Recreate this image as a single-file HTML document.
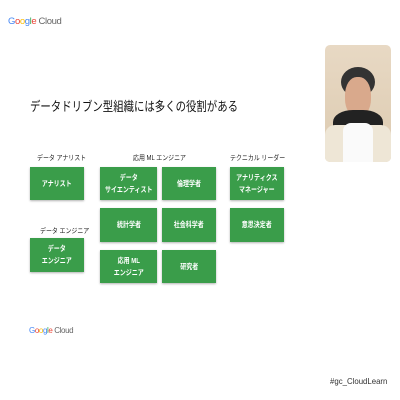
<html><head><style>
body{margin:0;width:400px;height:400px;background:#fff;position:relative;overflow:hidden;font-family:"Liberation Sans","Noto Sans CJK JP",sans-serif;color:#222}
.a{position:absolute}
.b{position:absolute;background:#3a9d4a;color:#fff;font-size:7.5px;font-weight:bold;display:flex;align-items:center;justify-content:center;text-align:center;line-height:12px;box-shadow:0 1px 2px rgba(0,0,0,.3);white-space:nowrap}
.b span{display:inline-block;transform:scaleX(.8)}
.l{position:absolute;font-size:7px;color:#222;white-space:nowrap;transform:scaleX(.85);transform-origin:left}
.g{letter-spacing:-.4px;white-space:nowrap}
</style></head><body>
<div class="a g" style="left:8px;top:16px;font-size:9.5px"><span style="color:#4285f4">G</span><span style="color:#ea4335">o</span><span style="color:#fbbc05">o</span><span style="color:#4285f4">g</span><span style="color:#34a853">l</span><span style="color:#ea4335">e</span> <span style="color:#666">Cloud</span></div>
<div class="a" style="left:30px;top:96px;font-size:13px;white-space:nowrap;transform:scaleX(.8);transform-origin:left;color:#111">データドリブン型組織には多くの役割がある</div>
<div class="a" style="left:325px;top:45px;width:66px;height:117px;border-radius:5px;background:linear-gradient(#e8d9c4,#dccab0);overflow:hidden">
<div class="a" style="left:16px;top:22px;width:34px;height:30px;background:#333;border-radius:50%"></div>
<div class="a" style="left:20px;top:32px;width:26px;height:40px;background:#d9a98c;border-radius:45%"></div>
<div class="a" style="left:8px;top:65px;width:50px;height:30px;background:#222;border-radius:40%"></div>
<div class="a" style="left:0px;top:80px;width:66px;height:40px;background:#eee6d6;border-radius:10px 10px 0 0"></div>
<div class="a" style="left:18px;top:78px;width:30px;height:42px;background:#fafafa;border-radius:8px 8px 0 0"></div>
</div>
<div class="l" style="left:37px;top:153px">データ アナリスト</div>
<div class="l" style="left:133px;top:153px">応用 ML エンジニア</div>
<div class="l" style="left:230px;top:153px">テクニカル リーダー</div>
<div class="l" style="left:40px;top:226px">データ エンジニア</div>
<div class="b" style="left:30px;top:167px;width:54px;height:33px"><span>アナリスト</span></div>
<div class="b" style="left:30px;top:238px;width:54px;height:34px"><span>データ<br>エンジニア</span></div>
<div class="b" style="left:100px;top:167px;width:57px;height:33px"><span>データ<br>サイエンティスト</span></div>
<div class="b" style="left:162px;top:167px;width:54px;height:33px"><span>倫理学者</span></div>
<div class="b" style="left:100px;top:208px;width:57px;height:34px"><span>統計学者</span></div>
<div class="b" style="left:162px;top:208px;width:54px;height:34px"><span>社会科学者</span></div>
<div class="b" style="left:100px;top:250px;width:57px;height:33px"><span>応用 ML<br>エンジニア</span></div>
<div class="b" style="left:162px;top:250px;width:54px;height:33px"><span>研究者</span></div>
<div class="b" style="left:230px;top:167px;width:54px;height:33px"><span>アナリティクス<br>マネージャー</span></div>
<div class="b" style="left:230px;top:208px;width:54px;height:34px"><span>意思決定者</span></div>
<div class="a g" style="left:29px;top:326px;font-size:8px"><span style="color:#4285f4">G</span><span style="color:#ea4335">o</span><span style="color:#fbbc05">o</span><span style="color:#4285f4">g</span><span style="color:#34a853">l</span><span style="color:#ea4335">e</span> <span style="color:#666">Cloud</span></div>
<div class="a" style="left:330px;top:376px;font-size:8.5px;color:#333;transform:scaleX(.92);transform-origin:left">#gc_CloudLearn</div>
</body></html>
